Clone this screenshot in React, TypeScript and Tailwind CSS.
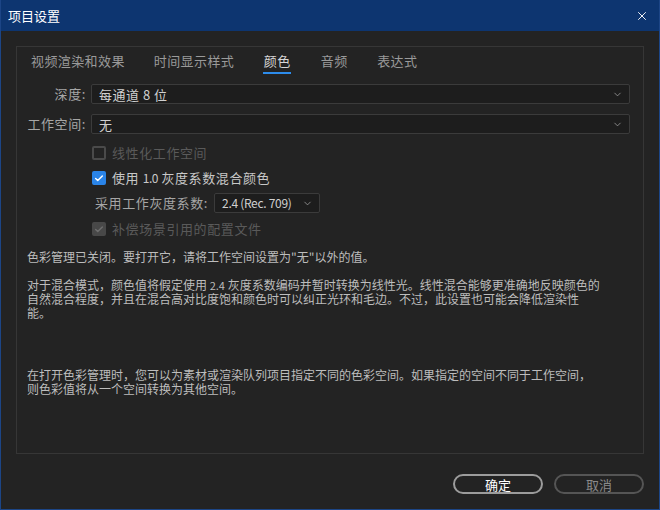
import { Check, ChevronDown, X } from "lucide-react";

const font = { fontFamily: '"Noto Sans CJK SC", "Noto Sans", sans-serif' };

export default function App() {
  return (
    <div
      className="flex h-[510px] w-[660px] flex-col border-x border-b border-[#1c4586] bg-[#232323] text-[12px] text-[#c4c4c4]"
      style={font}
    >
      <div className="flex h-[31px] items-center justify-between bg-[#0d3570] pl-[7px] pr-[10px]">
        <span className="text-[13px] leading-none text-white">项目设置</span>
        <X className="h-[14px] w-[14px] text-white" strokeWidth={1.6} />
      </div>

      <div className="px-[15px] pt-[15px]">
        <div className="h-[408px] border border-[#363636]">
          <Tabs />

          <div className="mt-[10px] flex items-center">
            <Label width="w-[69px]">深度:</Label>
            <Select className="ml-[5px] mr-[13px] flex-1" value="每通道 8 位" />
          </div>
          <div className="mt-[10px] flex items-center">
            <Label width="w-[69px]">工作空间:</Label>
            <Select className="ml-[5px] mr-[13px] flex-1" value="无" />
          </div>

          <div className="ml-[75px] mt-[11px] flex flex-col">
            <CheckRow state="off-disabled" label="线性化工作空间" />
            <CheckRow
              state="on"
              className="mt-[9px]"
              label={
                <>
                  使用 <span className="text-[12px] tracking-[-0.5px]">1.0</span> 灰度系数混合颜色
                </>
              }
            />
            <div className="mt-[7px] flex items-center">
              <span className="ml-[3px] text-[13px] tracking-[0.6px] text-[#a6a6a6]">采用工作灰度系数:</span>
              <Select className="ml-[6px] w-[106px]" value="2.4 (Rec. 709)" small />
            </div>
            <CheckRow state="on-disabled" className="mt-[8px]" label="补偿场景引用的配置文件" />
          </div>

          <div className="ml-[10px] mr-[20px] mt-[13px] leading-[14px] text-[#bdbdbd]">
            <p>色彩管理已关闭。要打开它，请将工作空间设置为"无"以外的值。</p>
            <p className="mt-[14px]">
              对于混合模式，颜色值将假定使用 <span className="text-[11px]">2.4</span> 灰度系数编码并暂时转换为线性光。线性混合能够更准确地反映颜色的
              <br />
              自然混合程度，并且在混合高对比度饱和颜色时可以纠正光环和毛边。不过，此设置也可能会降低渲染性
              <br />
              能。
            </p>
            <p className="mt-[48px]">
              在打开色彩管理时，您可以为素材或渲染队列项目指定不同的色彩空间。如果指定的空间不同于工作空间，
              <br />
              则色彩值将从一个空间转换为其他空间。
            </p>
          </div>
        </div>

        <div className="mt-[20px] flex justify-end gap-[11px]">
          <button className="flex h-[20px] w-[90px] items-center justify-center rounded-full border-2 border-[#9c9c9c] text-[13px] leading-none text-white">
            确定
          </button>
          <button className="flex h-[20px] w-[90px] items-center justify-center rounded-full border-2 border-[#555555] text-[13px] leading-none text-[#8a8a8a]">
            取消
          </button>
        </div>
      </div>
    </div>
  );
}

function Tabs() {
  const tabs = ["视频渲染和效果", "时间显示样式", "颜色", "音频", "表达式"];
  return (
    <div className="flex gap-[29px] pl-[14px] pt-[6px]">
      {tabs.map((t) => (
        <div key={t} className="flex flex-col items-center">
          <span
            className={`text-[13px] leading-[16px] tracking-[0.4px] ${
              t === "颜色" ? "text-[#d6d6d6]" : "text-[#9a9a9a]"
            }`}
          >
            {t}
          </span>
          <div className={`mt-[3px] h-[2px] w-[28px] ${t === "颜色" ? "bg-[#2d8ceb]" : "bg-transparent"}`} />
        </div>
      ))}
    </div>
  );
}

function Label({ children, width }: { children: React.ReactNode; width: string }) {
  return (
    <span className={`${width} text-right text-[13px] tracking-[0.6px] text-[#a6a6a6]`}>{children}</span>
  );
}

function Select({ value, className, small }: { value: string; className?: string; small?: boolean }) {
  return (
    <div
      className={`flex h-[20px] items-center justify-between rounded-[2px] border border-[#3b3b3b] bg-[#1d1d1d] pl-[7px] pr-[6px] ${className ?? ""}`}
    >
      <span className={`${small ? "text-[12px] tracking-[-0.3px]" : "text-[13px] tracking-[0.5px]"} leading-none text-[#d0d0d0]`}>
        {value}
      </span>
      <ChevronDown className="h-[11px] w-[11px] text-[#a8a8a8]" strokeWidth={1.6} />
    </div>
  );
}

function CheckRow({
  state,
  label,
  className,
}: {
  state: "on" | "on-disabled" | "off-disabled";
  label: React.ReactNode;
  className?: string;
}) {
  const box =
    state === "on"
      ? "bg-[#2a84e8] border-[#2a84e8]"
      : state === "on-disabled"
        ? "bg-[#484848] border-[#484848]"
        : "border-[#4a4a4a] bg-transparent";
  return (
    <div className={`flex items-center ${className ?? ""}`}>
      <div className={`flex h-[14px] w-[14px] items-center justify-center rounded-[2px] border-2 ${box}`}>
        {state !== "off-disabled" && (
          <Check
            className={`h-[11px] w-[11px] ${state === "on" ? "text-[#ffffff]" : "text-[#6e6e6e]"}`}
            strokeWidth={3.5}
          />
        )}
      </div>
      <span
        className={`ml-[6px] text-[13px] leading-[16px] tracking-[0.6px] ${
          state === "on" ? "text-[#c8c8c8]" : "text-[#5a5a5a]"
        }`}
      >
        {label}
      </span>
    </div>
  );
}
